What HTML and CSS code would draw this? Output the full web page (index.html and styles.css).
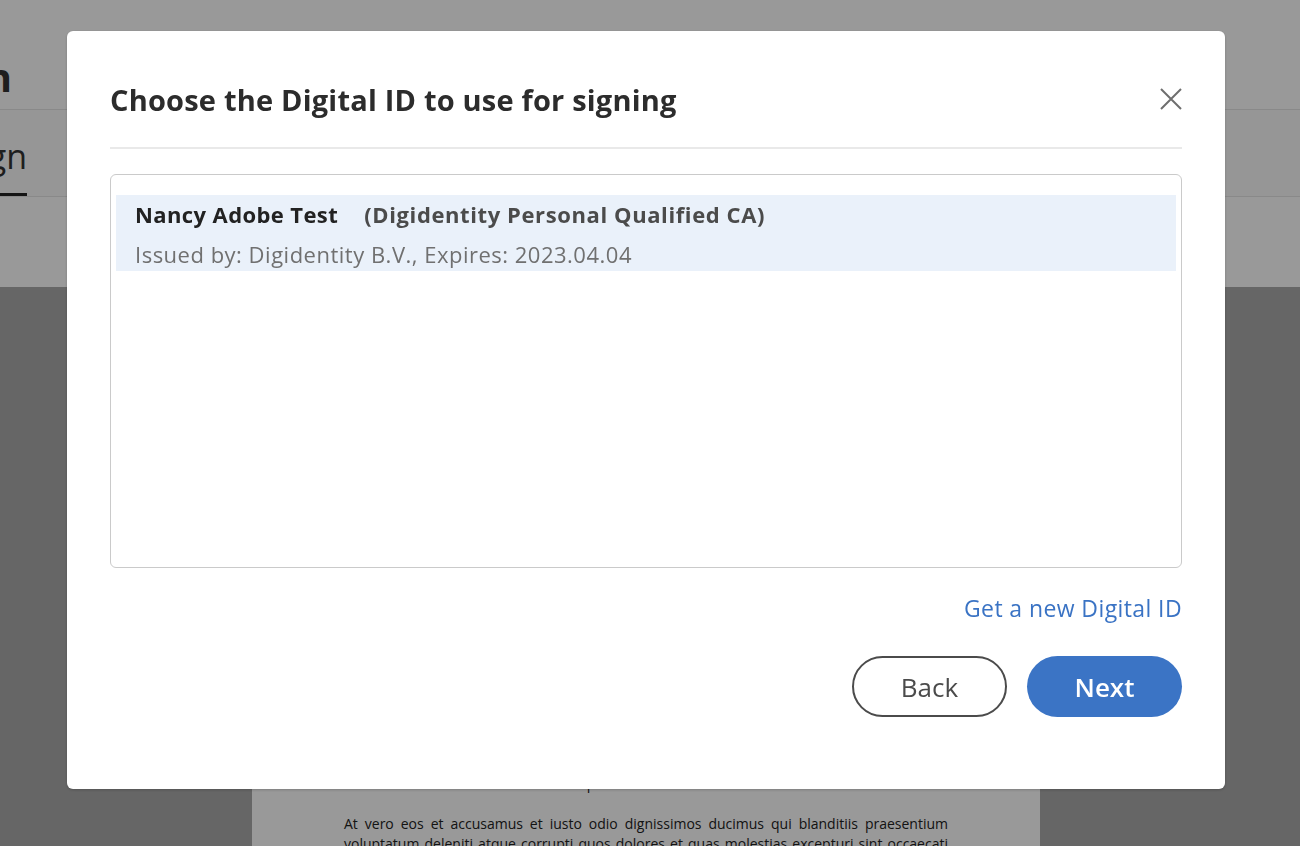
FILE: index.html
```html
<!DOCTYPE html>
<html lang="en">

<head>
    <meta charset="UTF-8">
    <meta name="viewport" content="width=device-width, initial-scale=1.0">
    <title>Sign - Choose Digital ID</title>
    <link rel="stylesheet" href="styles.css">
</head>

<body>

    <div class="app">
        <header class="app-head">
            <div class="app-title"><span>Fill &amp; Sign</span></div>
        </header>
        <nav class="tabs">
            <div class="tab"><span>Sign</span></div>
        </nav>
        <div class="toolbar"></div>
        <main class="viewer">
            <div class="page">
                <p>Lorem ipsum dolor sit amet, consectetur adipiscing elit, sed do eiusmod tempor incididunt ut labore
                    et dolore magna aliqua. Ut enim ad minim veniam, quis nostrud exercitation ullamco laboris nisi ut
                    aliquip ex ea commodo consequat. Duis aute irure dolor in reprehenderit in voluptate velit esse
                    cillum dolore eu fugiat nulla pariatur, signature in quality reporting, excepteur sint occaecat
                    cupidatat non proident, sunt in culpa qui officia deserunt mollit anim id est laborum quia.</p>
                <p>At vero eos et accusamus et iusto odio dignissimos ducimus qui blanditiis praesentium voluptatum
                    deleniti atque corrupti quos dolores et quas molestias excepturi sint occaecati cupiditate non
                    provident, similique sunt in culpa qui officia deserunt mollitia animi, id est laborum et dolorum
                    fuga.</p>
            </div>
        </main>
    </div>

    <div class="overlay">
        <div class="dialog">
            <div class="dialog-head">
                <h1>Choose the Digital ID to use for signing</h1>
                <button class="close" aria-label="Close">
                    <svg width="22" height="22" viewBox="0 0 22 22">
                        <path d="M1 1 L21 21 M21 1 L1 21" stroke="#6e6e6e" stroke-width="2" fill="none" />
                    </svg>
                </button>
            </div>
            <div class="divider"></div>

            <div class="id-list">
                <div class="id-item selected">
                    <div class="id-name">Nancy Adobe Test <span class="id-ca">(Digidentity Personal Qualified CA)</span></div>
                    <div class="id-meta">Issued by: Digidentity B.V., Expires: 2023.04.04</div>
                </div>
            </div>

            <div class="link-row">
                <a href="#" class="new-id">Get a new Digital ID</a>
            </div>

            <div class="actions">
                <button class="btn btn-back">Back</button>
                <button class="btn btn-next">Next</button>
            </div>
        </div>
    </div>

</body>

</html>
```

FILE: styles.css
```css
body {
    margin: 0;
    padding: 0;
    font-family: "Open Sans", Arial, sans-serif;
    background: #aaaaaa;
    color: #222;
    overflow: hidden;
}

.app {
    height: 846px;
    display: flex;
    flex-direction: column;
    overflow: hidden;
}

.app-head {
    flex-shrink: 0;
    height: 109px;
    background: #ffffff;
    border-bottom: 1px solid #e4e4e4;
    display: flex;
    align-items: center;
}

.app-title {
    width: 12px;
    display: flex;
    justify-content: flex-end;
    white-space: nowrap;
    font-size: 40px;
    font-weight: 700;
    color: #333;
    padding-top: 44px;
}

.tabs {
    flex-shrink: 0;
    height: 86px;
    background: #fbfbfb;
    border-bottom: 1px solid #e4e4e4;
    display: flex;
    align-items: stretch;
}

.tab {
    width: 27px;
    display: flex;
    justify-content: flex-end;
    align-items: center;
    white-space: nowrap;
    font-size: 34px;
    color: #333;
    padding-top: 8px;
    border-bottom: 3px solid #222;
}

.toolbar {
    flex-shrink: 0;
    height: 90px;
    background: #ffffff;
}

.viewer {
    flex-shrink: 0;
    background: #aaaaaa;
    padding-left: 252px;
    padding-top: 367px;
    min-height: 600px;
}

.page {
    width: 604px;
    background: #ffffff;
    padding: 20px 92px;
    font-size: 14px;
    line-height: 20px;
    color: #222;
    text-align: justify;
}

.page p {
    margin: 0 0 20px;
}

/* dialog */

.overlay {
    position: fixed;
    top: 0;
    left: 0;
    width: 100vw;
    height: 100vh;
    background: rgba(0, 0, 0, 0.4);
    padding: 31px 0 0 67px;
    box-sizing: border-box;
}

.dialog {
    width: 1158px;
    height: 758px;
    box-sizing: border-box;
    background: #ffffff;
    border-radius: 6px;
    padding: 0 43px;
    box-shadow: 0 1px 3px rgba(0, 0, 0, 0.2);
}

.dialog-head {
    height: 116px;
    display: flex;
    align-items: center;
    justify-content: space-between;
    padding-top: 20px;
    box-sizing: border-box;
}

.dialog-head h1 {
    margin: 0;
    font-size: 29px;
    font-weight: 700;
    color: #2c2c2c;
    letter-spacing: 0.2px;
}

.close {
    border: none;
    background: none;
    padding: 0;
    width: 22px;
    height: 22px;
    display: flex;
}

.divider {
    height: 2px;
    background: #e9e9e9;
}

.id-list {
    margin-top: 25px;
    height: 394px;
    box-sizing: border-box;
    border: 1px solid #cacaca;
    border-radius: 6px;
    padding: 20px 5px;
}

.id-item {
    padding: 4px 19px 2px;
}

.id-item.selected {
    background: #eaf1fa;
}

.id-name {
    font-size: 22px;
    font-weight: 700;
    line-height: 30px;
    color: #222;
    letter-spacing: 0.4px;
}

.id-ca {
    color: #4b4b4b;
    margin-left: 20px;
    letter-spacing: 0.6px;
}

.id-meta {
    margin-top: 10px;
    font-size: 22px;
    line-height: 30px;
    color: #707070;
    letter-spacing: 0.5px;
}

.link-row {
    display: flex;
    justify-content: flex-end;
    margin-top: 24px;
}

.new-id {
    font-size: 23px;
    color: #3a73c4;
    text-decoration: none;
    letter-spacing: 0.4px;
}

.actions {
    display: flex;
    justify-content: flex-end;
    gap: 20px;
    margin-top: 32px;
}

.btn {
    width: 155px;
    height: 61px;
    border-radius: 31px;
    font-family: "Open Sans", Arial, sans-serif;
    font-size: 26px;
    cursor: pointer;
}

.btn-back {
    background: #ffffff;
    border: 2px solid #4b4b4b;
    color: #4b4b4b;
}

.btn-next {
    background: #3b74c5;
    border: none;
    color: #ffffff;
    font-weight: 600;
}
```
